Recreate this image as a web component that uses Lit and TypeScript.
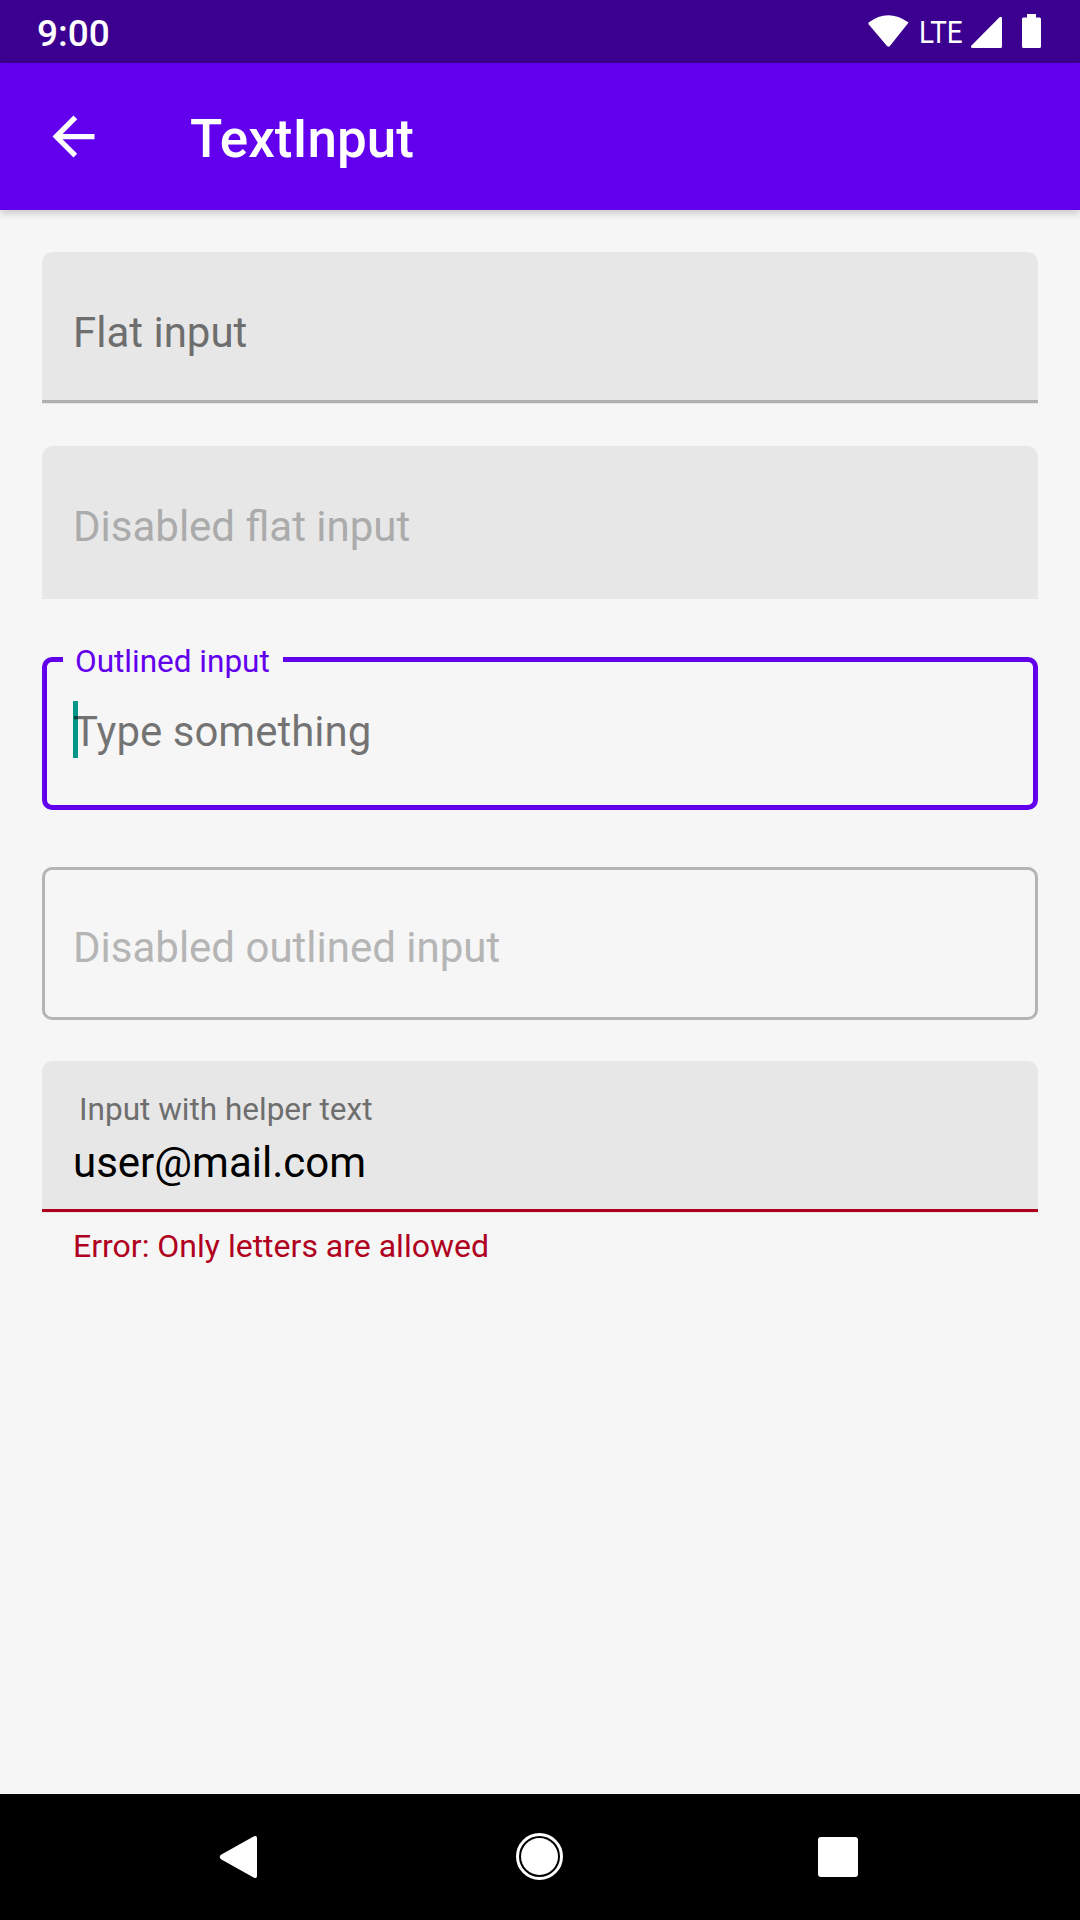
import { LitElement, html, css, nothing } from "lit";
import { customElement, property } from "lit/decorators.js";

@customElement("text-field")
class TextField extends LitElement {
  @property() mode = "flat";
  @property() label = "";
  @property() text = "";
  @property() helper = "";

  static styles = css`
    :host { display: block; }
    .flat {
      box-sizing: border-box;
      height: 153px;
      position: relative;
      background: #e7e7e7;
      border-radius: 11px 11px 0 0;
      padding: 0 31px;
    }
    .short { height: 152px; }
    .bar { position: absolute; left: 0; right: 0; bottom: 1px; height: 3px; background: #b0b0b0; }
    .bar.error { background: #b00020; }
    .outlined {
      box-sizing: border-box;
      height: 153px;
      position: relative;
      border: 3px solid #b4b4b4;
      border-radius: 10px;
      padding: 0 28px;
    }
    .focused { border: 5px solid #6200ee; padding: 0 26px; }
    .big { font-size: 42px; line-height: 49px; white-space: pre; }
    .flat .big { padding-top: 56px; }
    .outlined .big { padding-top: 53px; }
    .dim { color: #6e6e6e; }
    .disabled { color: #ababab; }
    .outlined .disabled { color: #b5b5b5; }
    .focused .big { position: relative; padding-top: 45px; color: rgba(0, 0, 0, 0.54); }
    .notch {
      position: absolute; left: 16px; top: -19px;
      width: 220px; box-sizing: border-box; padding-left: 12px;
      background: #f6f6f6; color: #6200ee;
      font-size: 31.5px; line-height: 37px; white-space: pre;
    }
    .caret { position: absolute; left: 26px; top: 39px; width: 5px; height: 57px; background: #009688; }
    .filled .label { padding: 30px 0 0 6px; font-size: 31.5px; line-height: 37px; color: #6e6e6e; }
    .filled .big { padding-top: 10px; color: #000; }
    .helper { padding: 15px 31px 0; font-size: 32px; line-height: 37px; color: #b00020; }
  `;

  render() {
    if (this.mode === "focused")
      return html`<div class="outlined focused">
        <div class="notch">${this.label}</div>
        <div class="caret"></div>
        <div class="big">${this.text}</div>
      </div>`;
    if (this.mode === "outlined")
      return html`<div class="outlined"><div class="big disabled">${this.label}</div></div>`;
    if (this.mode === "filled")
      return html`<div class="flat short filled">
          <div class="label">${this.label}</div>
          <div class="big">${this.text}</div>
          <div class="bar error"></div>
        </div>
        <div class="helper">${this.helper}</div>`;
    const off = this.mode === "disabled";
    return html`<div class="flat ${off ? "" : "short"}">
      <div class="big ${off ? "disabled" : "dim"}">${this.label}</div>
      ${off ? nothing : html`<div class="bar"></div>`}
    </div>`;
  }
}

@customElement("app-root")
class AppRoot extends LitElement {
  static styles = css`
    :host {
      display: flex;
      flex-direction: column;
      height: 1920px;
      background: #f6f6f6;
      font-family: Roboto, sans-serif;
      overflow: hidden;
    }
    svg { display: block; fill: #fff; }
    .status {
      flex: none; height: 63px; box-sizing: border-box; padding: 0 36px 0 37px;
      display: flex; justify-content: space-between;
      background: #3b008f; color: #fff;
    }
    .time { font-size: 37px; font-weight: 500; line-height: 67px; }
    .tray { display: flex; }
    .lte {
      font-size: 32px; line-height: 64px; width: 51px; white-space: pre;
      transform: scaleX(0.87); transform-origin: 0 50%;
    }
    .appbar {
      flex: none; height: 147px; display: flex; align-items: center;
      background: #6200ee; color: #fff; position: relative;
      box-shadow: 0 3px 8px rgba(0, 0, 0, 0.2);
    }
    .back { padding-left: 42px; }
    .title { padding: 4px 0 0 85px; font-size: 53px; font-weight: 500; }
    .body { flex: 1; padding: 42px 42px 0; }
    .a { margin-bottom: 42px; }
    .b { margin-bottom: 58px; }
    .c { margin-bottom: 57px; }
    .d { margin-bottom: 41px; }
    .nav { flex: none; height: 126px; background: #000; }
  `;

  render() {
    return html`
      <div class="status">
        <div class="time">9:00</div>
        <div class="tray">
          <svg width="51" height="63" viewBox="868 0 51 63"><path d="M868.6 22.6Q888 8 908.6 22.6L889.9 46Q888.5 47.6 887 46L868.8 24.4Q868 23.2 868.6 22.6Z"/></svg>
          <div class="lte">LTE</div>
          <svg width="74" height="63" viewBox="970 0 74 63"><path d="M999.5 17.3Q1002 16 1002 18.5V46.5Q1002 48 1000.5 48H972.5Q970 47.4 971.5 45.4Z"/><path d="M1027 14h9v3.5h3.5Q1041 17.5 1041 19V46.5Q1041 48 1039.5 48H1023.5Q1022 48 1022 46.5V19Q1022 17.5 1023.5 17.5H1027Z"/></svg>
        </div>
      </div>
      <div class="appbar">
        <svg class="back" width="63" height="63" viewBox="0 0 24 24"><path d="M20 11H7.830l5.590-5.590L12 4l-8 8 8 8 1.410-1.410L7.830 13H20v-2z"/></svg>
        <div class="title">TextInput</div>
      </div>
      <div class="body">
        <text-field class="a" mode="flat" label="Flat input"></text-field>
        <text-field class="b" mode="disabled" label="Disabled flat input"></text-field>
        <text-field class="c" mode="focused" label="Outlined input" text="Type something"></text-field>
        <text-field class="d" mode="outlined" label="Disabled outlined input"></text-field>
        <text-field mode="filled" label="Input with helper text" text="user@mail.com" helper="Error: Only letters are allowed"></text-field>
      </div>
      <div class="nav">
        <svg width="1080" height="126" viewBox="0 1794 1080 126">
          <path d="M254 1836.300Q257 1835 257 1838V1876Q257 1879 254 1877.700L221 1859.200Q218.500 1857 221 1854.800Z"/>
          <circle cx="539.500" cy="1856.500" r="22" fill="none" stroke="#fff" stroke-width="3"/>
          <circle cx="539.500" cy="1856.500" r="18.500"/>
          <rect x="818" y="1837" width="40" height="40" rx="3"/>
        </svg>
      </div>
    `;
  }
}
